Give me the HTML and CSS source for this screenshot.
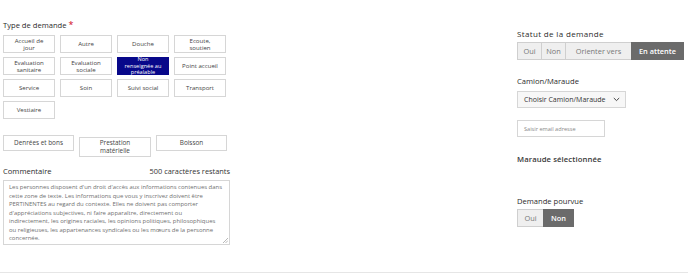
FILE: index.html
```html
<!DOCTYPE html>
<html lang="fr">
<head>
<meta charset="utf-8">
<link rel="stylesheet" href="styles.css">
</head>
<body>
<div class="page">
  <div class="left">
    <div class="label">Type de demande <span class="req">*</span></div>
    <div class="grid">
      <div class="opt">Accueil de<br>jour</div>
      <div class="opt">Autre</div>
      <div class="opt">Douche</div>
      <div class="opt">Ecoute,<br>soutien</div>
      <div class="opt">Evaluation<br>sanitaire</div>
      <div class="opt">Evaluation<br>sociale</div>
      <div class="opt sel">Non<br>renseignée au<br>préalable</div>
      <div class="opt">Point accueil</div>
      <div class="opt">Service</div>
      <div class="opt">Soin</div>
      <div class="opt">Suivi social</div>
      <div class="opt">Transport</div>
      <div class="opt">Vestiaire</div>
    </div>
    <div class="grid3">
      <div class="opt2">Denrées et bons</div>
      <div class="opt2 tall">Prestation<br>matérielle</div>
      <div class="opt2">Boisson</div>
    </div>
    <div class="comment-head">
      <span class="label">Commentaire</span>
      <span class="count">500 caractères restants</span>
    </div>
    <div class="textarea">Les personnes disposent d'un droit d'accès aux informations contenues dans cette zone de texte. Les informations que vous y inscrivez doivent être PERTINENTES au regard du contexte. Elles ne doivent pas comporter d'appréciations subjectives, ni faire apparaître, directement ou indirectement, les origines raciales, les opinions politiques, philosophiques ou religieuses, les appartenances syndicales ou les mœurs de la personne concernée.<svg class="grip" width="5" height="5" viewBox="0 0 5 5"><path d="M0 5L5 0M2.5 5L5 2.5" stroke="#999" stroke-width="0.7"/></svg></div>
  </div>
  <div class="right">
    <div class="rlabel first">Statut de la demande</div>
    <div class="seg">
      <div class="s w24">Oui</div>
      <div class="s w24">Non</div>
      <div class="s w66">Orienter vers</div>
      <div class="s w52 on">En attente</div>
    </div>
    <div class="rlabel l2">Camion/Maraude</div>
    <div class="select">Choisir Camion/Maraude
      <svg width="7" height="5" viewBox="0 0 7 5"><path d="M0.8 1L3.5 3.6L6.2 1" fill="none" stroke="#333" stroke-width="0.9"/></svg>
    </div>
    <div class="input">Saisir email adresse</div>
    <div class="rlabel l3 strong">Maraude sélectionnée</div>
    <div class="rlabel l4">Demande pourvue</div>
    <div class="seg">
      <div class="s w26">Oui</div>
      <div class="s w30 on">Non</div>
    </div>
  </div>
</div>
<div class="rule"></div>
</body>
</html>
```
FILE: styles.css
```css
* { box-sizing: border-box; }
html, body { margin: 0; padding: 0; background: #fff; }
body { font-family: "Open Sans", "Liberation Sans", sans-serif; color: #333; width: 688px; height: 274px; overflow: hidden; }
.page { display: flex; height: 270px; }
.left { width: 227px; margin-left: 3px; padding-top: 20px; }
.label { font-size: 7.6px; line-height: 10px; color: #2b2b2b; height: 10px; font-weight: 500; }
.req { color: #d0021b; font-size: 9px; line-height: 8px; }
.grid { display: grid; grid-template-columns: repeat(4, 52px); grid-auto-rows: 18px; column-gap: 5px; row-gap: 4px; margin-top: 5px; }
.opt { border: 1px solid #d6d6d6; background: #fff; font-size: 6.1px; line-height: 7.5px; text-align: center; display: flex; align-items: center; justify-content: center; color: #444; overflow: visible; }
.opt.sel { background: #08088a; color: #fff; border-color: #08088a; line-height: 6.6px; font-size: 5.6px; }
.grid3 { display: flex; gap: 5px; margin-top: 16px; align-items: flex-start; }
.opt2 { width: 71px; height: 16px; border: 1px solid #d6d6d6; font-size: 6.4px; line-height: 7.4px; text-align: center; display: flex; align-items: center; justify-content: center; color: #444; }
.opt2:nth-child(2) { width: 72px; }
.opt2.tall { height: 20px; margin-top: 2px; line-height: 7.9px; }
.comment-head { display: flex; justify-content: space-between; align-items: center; margin-top: 9px; height: 10px; }
.count { font-size: 7.4px; color: #333; }
.textarea { position: relative; margin-top: 4px; height: 65px; border: 1px solid #d6d6d6; padding: 2px 5px; font-size: 5.95px; line-height: 8.5px; color: #707070; }
.grip { position: absolute; right: 1px; bottom: 1px; }
.right { margin-left: auto; width: 171px; padding-top: 29px; }
.rlabel { font-size: 7.6px; line-height: 10px; height: 10px; color: #2b2b2b; }
.first { font-size: 8px; letter-spacing: 0.35px; }
.strong { font-weight: 600; font-size: 7.7px; letter-spacing: 0.1px; color: #3a3a3a; }
.seg { display: flex; margin-top: 3px; height: 18px; }
.s { border: 1px solid #cfcfcf; background: #efefef; font-size: 7.4px; color: #777; display: flex; align-items: center; justify-content: center; margin-left: -1px; }
.s:first-child { margin-left: 0; }
.s.on { background: #6b6b6b; border-color: #6b6b6b; color: #fff; font-weight: 600; }
.w24 { width: 25px; } .w66 { width: 67px; } .w52 { width: 53px; } .w26 { width: 27px; } .w30 { width: 31px; }
.l2 { margin-top: 16px; }
.select { margin-top: 5px; width: 109px; height: 17px; border: 1px solid #d6d6d6; background: #f7f7f7; font-size: 7px; color: #333; display: flex; align-items: center; justify-content: space-between; padding: 0 5px 0 6px; }
.input { margin-top: 12px; width: 88px; height: 17px; border: 1px solid #d6d6d6; font-size: 5.6px; color: #888; display: flex; align-items: center; padding-left: 6px; }
.l3 { margin-top: 17px; }
.l4 { margin-top: 32px; }
.rule { height: 1px; background: #e6e6e6; margin-top: 2px; }
```
